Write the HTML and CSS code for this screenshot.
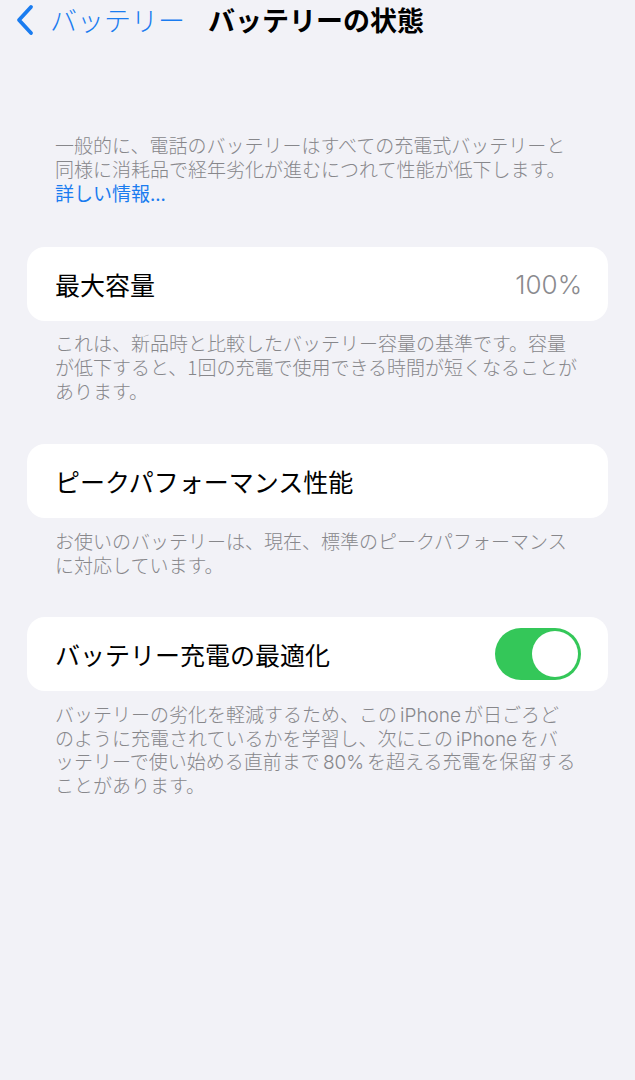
FILE: index.html
```html
<!DOCTYPE html>
<html lang="ja">
<head>
<meta charset="utf-8">
<link rel="stylesheet" href="styles.css">
</head>
<body>
<header class="nav">
  <a class="back">
    <svg class="chev" width="20" height="32" viewBox="0 0 20 32"><path d="M16 3 L4 16 L16 29" fill="none" stroke="#1a7cf0" stroke-width="3.8" stroke-linecap="round" stroke-linejoin="round"/></svg>
    <span class="back-label">バッテリー</span>
  </a>
  <h1 class="title">バッテリーの状態</h1>
</header>

<p class="intro">一般的に、電話のバッテリーはすべての充電式バッテリーと<br>同様に消耗品で経年劣化が進むにつれて性能が低下します。<br><span class="link">詳しい情報...</span></p>

<section class="group g1">
  <div class="card">
    <span class="label">最大容量</span>
    <span class="value">100%</span>
  </div>
  <p class="foot">これは、新品時と比較したバッテリー容量の基準です。容量<br>が低下すると、1回の充電で使用できる時間が短くなることが<br>あります。</p>
</section>

<section class="group g2">
  <div class="card">
    <span class="label">ピークパフォーマンス性能</span>
  </div>
  <p class="foot">お使いのバッテリーは、現在、標準のピークパフォーマンス<br>に対応しています。</p>
</section>

<section class="group g3">
  <div class="card">
    <span class="label">バッテリー充電の最適化</span>
    <span class="toggle"><span class="knob"></span></span>
  </div>
  <p class="foot">バッテリーの劣化を軽減するため、この<span class="lat">iPhone</span>が日ごろど<br>のように充電されているかを学習し、次にこの<span class="lat">iPhone</span>をバ<br>ッテリーで使い始める直前まで<span class="lat">80%</span>を超える充電を保留する<br>ことがあります。</p>
</section>
</body>
</html>
```

FILE: styles.css
```css
html, body {
  margin: 0;
  padding: 0;
  background: #f2f2f7;
}
body {
  font-family: "Noto Sans CJK JP", "Noto Sans", sans-serif;
  color: #000;
  width: 635px;
  min-height: 1080px;
}
.nav {
  height: 40px;
  display: flex;
  align-items: center;
  padding-left: 15px;
}
.back {
  display: flex;
  align-items: center;
  color: #1a7cf0;
}
.chev {
  display: block;
}
.back-label {
  font-size: 27px;
  font-weight: 300;
  margin-left: 15px;
  line-height: 40px;
}
.title {
  margin: 0 0 0 23px;
  font-size: 27px;
  font-weight: 700;
  line-height: 40px;
}
.intro {
  margin: 93px 0 0 55px;
  font-size: 19px;
  font-weight: 300;
  line-height: 24px;
  color: #87878b;
}
.link {
  color: #1a7cf0;
  font-weight: 400;
}
.group {
  margin: 0 27px;
}
.g1 { margin-top: 42px; }
.g2 { margin-top: 41px; }
.g3 { margin-top: 40px; }
.card {
  background: #fff;
  border-radius: 18px;
  height: 74px;
  display: flex;
  align-items: center;
  justify-content: space-between;
  padding: 0 28px;
}
.label {
  font-size: 25px;
}
.value {
  font-family: "Inter", "Noto Sans", sans-serif;
  font-size: 26px;
  font-weight: 300;
  color: #8a8a8e;
  margin-right: -2px;
}
.foot {
  margin: 10px 0 0 28px;
  font-size: 19px;
  font-weight: 300;
  line-height: 24px;
  color: #87878b;
}
.lat {
  font-family: "Inter", "Noto Sans", sans-serif;
  line-height: 1;
  margin: 0 3px;
}
.g2 .foot { margin-top: 11px; }
.g3 .foot { margin-top: 11px; line-height: 23.5px; }
.toggle {
  width: 86px;
  height: 52px;
  border-radius: 26px;
  background: #34c759;
  display: flex;
  align-items: center;
  justify-content: flex-end;
  padding-right: 3px;
  box-sizing: border-box;
  margin-right: -1px;
}
.knob {
  width: 46px;
  height: 46px;
  border-radius: 50%;
  background: #fff;
}
```
